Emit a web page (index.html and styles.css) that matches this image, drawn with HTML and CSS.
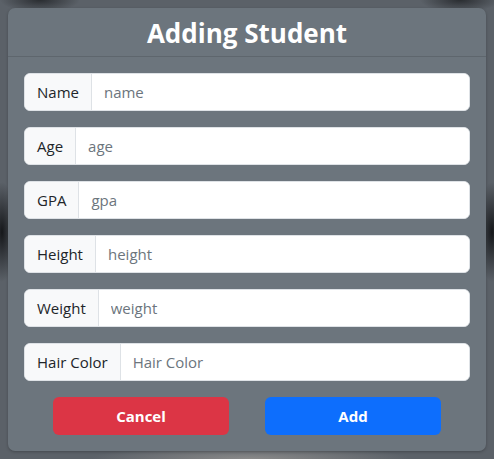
FILE: index.html
```html
<!DOCTYPE html>
<html lang="en">
<head>
<meta charset="utf-8">
<title>Adding Student</title>
<link rel="stylesheet" href="styles.css">
</head>
<body>
<div class="backdrop">
  <div class="modal">
    <div class="modal-header">
      <h1 class="modal-title">Adding Student</h1>
    </div>
    <form class="modal-body">
      <div class="input-group">
        <span class="input-group-text">Name</span>
        <input class="form-control" type="text" placeholder="name">
      </div>
      <div class="input-group">
        <span class="input-group-text">Age</span>
        <input class="form-control" type="text" placeholder="age">
      </div>
      <div class="input-group">
        <span class="input-group-text">GPA</span>
        <input class="form-control" type="text" placeholder="gpa">
      </div>
      <div class="input-group">
        <span class="input-group-text">Height</span>
        <input class="form-control" type="text" placeholder="height">
      </div>
      <div class="input-group">
        <span class="input-group-text">Weight</span>
        <input class="form-control" type="text" placeholder="weight">
      </div>
      <div class="input-group">
        <span class="input-group-text">Hair Color</span>
        <input class="form-control" type="text" placeholder="Hair Color">
      </div>
      <div class="actions">
        <button type="button" class="btn btn-cancel">Cancel</button>
        <button type="button" class="btn btn-add">Add</button>
      </div>
    </form>
  </div>
</div>
</body>
</html>
```
FILE: styles.css
```css
* { box-sizing: border-box; }
html, body { margin: 0; padding: 0; }
body {
  width: 494px;
  height: 459px;
  overflow: hidden;
  font-family: "Open Sans", "Noto Sans", sans-serif;
  background-color: #5b6168;
  background-image:
    radial-gradient(ellipse 14px 50px at 2px 232px, #15171a 0%, rgba(21,23,26,0) 100%),
    radial-gradient(ellipse 14px 50px at 492px 232px, #15171a 0%, rgba(21,23,26,0) 100%),
    radial-gradient(ellipse 40px 12px at 40px 0px, #2a2d31 0%, rgba(42,45,49,0) 100%),
    radial-gradient(ellipse 40px 12px at 460px 0px, #2a2d31 0%, rgba(42,45,49,0) 100%),
    radial-gradient(ellipse 160px 14px at 250px 459px, #8a8a8a 0%, rgba(138,138,138,0) 100%);
}
.backdrop {
  padding: 8px;
}
.modal {
  width: 478px;
  height: 443px;
  background: #6c757d;
  border-radius: 7px;
  box-shadow: 0 1px 3px rgba(0,0,0,0.25);
  display: flex;
  flex-direction: column;
}
.modal-header {
  height: 49px;
  border-bottom: 1px solid #5e666d;
  display: flex;
  align-items: center;
  justify-content: center;
}
.modal-title {
  margin: 0;
  color: #fff;
  font-size: 26px;
  font-weight: 700;
  line-height: 1;
  padding-top: 2px;
}
.modal-body {
  margin: 0;
  padding: 16px 16px 16px 16px;
  display: flex;
  flex-direction: column;
  gap: 16px;
}
.input-group {
  display: flex;
  height: 38px;
  border-radius: 6px;
  overflow: hidden;
  border: 1px solid #dee2e6;
  background: #fff;
}
.input-group-text {
  display: flex;
  align-items: center;
  padding: 0 12px;
  background: #f8f9fa;
  color: #212529;
  font-size: 15px;
  border-right: 1px solid #dee2e6;
  white-space: nowrap;
}
.form-control {
  flex: 1;
  min-width: 0;
  border: 0;
  outline: none;
  padding: 0 12px;
  font-family: inherit;
  font-size: 15px;
  color: #212529;
  background: #fff;
}
.form-control::placeholder {
  color: #6c757d;
  opacity: 1;
}
.actions {
  display: flex;
  justify-content: center;
  gap: 36px;
}
.btn {
  width: 176px;
  height: 38px;
  border: 0;
  border-radius: 6px;
  color: #fff;
  font-family: inherit;
  font-size: 15px;
  font-weight: 700;
  cursor: pointer;
}
.btn-cancel { background: #dc3545; }
.btn-add { background: #0d6efd; }
```
